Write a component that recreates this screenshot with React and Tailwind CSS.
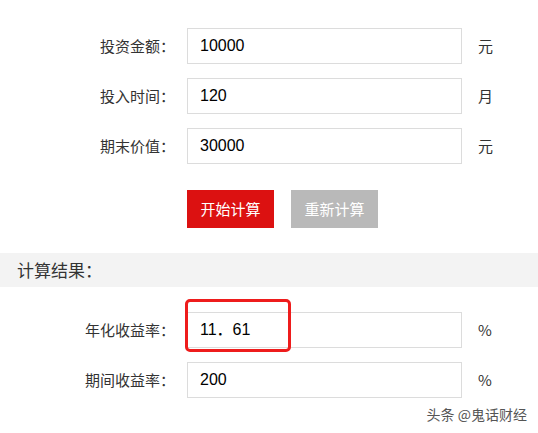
import React from 'react';

const inputs = [
  { label: '投资金额：', value: '10000', unit: '元' },
  { label: '投入时间：', value: '120', unit: '月' },
  { label: '期末价值：', value: '30000', unit: '元' },
];

const results = [
  { label: '年化收益率：', value: '11．61', unit: '%', mark: true },
  { label: '期间收益率：', value: '200', unit: '%' },
];

const Row = ({ label, value, unit, mark }) => (
  <div className="flex items-center h-[36px]">
    <div className="w-[175px] text-right text-[15px] text-[#333]">{label}</div>
    <div className="relative ml-[12px]">
      <div className="w-[275px] h-[36px] border border-[#dcdcdc] bg-white flex items-center pl-[12px] text-[16px] text-black font-['Liberation_Sans','Noto_Sans_CJK_SC',sans-serif]">
        {value}
      </div>
      {mark && (
        <div className="absolute left-[-2px] top-[-13px] w-[106px] h-[53px] border-[3px] border-[#ee1c1c] rounded-[5px]" />
      )}
    </div>
    <div className="ml-[16px] text-[15px] text-[#333]">{unit}</div>
  </div>
);

export default function App() {
  return (
    <div className="w-[538px] h-[433px] bg-white overflow-hidden font-['Noto_Sans_CJK_SC','Noto_Sans',sans-serif]">
      <div className="pt-[28px] flex flex-col gap-[14px]">
        {inputs.map((r) => (
          <Row key={r.label} {...r} />
        ))}
      </div>
      <div className="flex gap-[17px] pl-[187px] mt-[26px]">
        <button className="w-[87px] h-[38px] bg-[#dc1111] text-white text-[15px]">开始计算</button>
        <button className="w-[87px] h-[38px] bg-[#b9b9b9] text-white text-[15px]">重新计算</button>
      </div>
      <div className="mt-[25px] h-[34px] bg-[#f3f3f3] flex items-center pl-[17px] text-[17px] text-[#333]">
        计算结果：
      </div>
      <div className="pt-[25px] flex flex-col gap-[14px]">
        {results.map((r) => (
          <Row key={r.label} {...r} />
        ))}
      </div>
      <div className="flex justify-end pr-[11px] mt-[6px] text-[14px] text-[#555]">头条 @鬼话财经</div>
    </div>
  );
}
